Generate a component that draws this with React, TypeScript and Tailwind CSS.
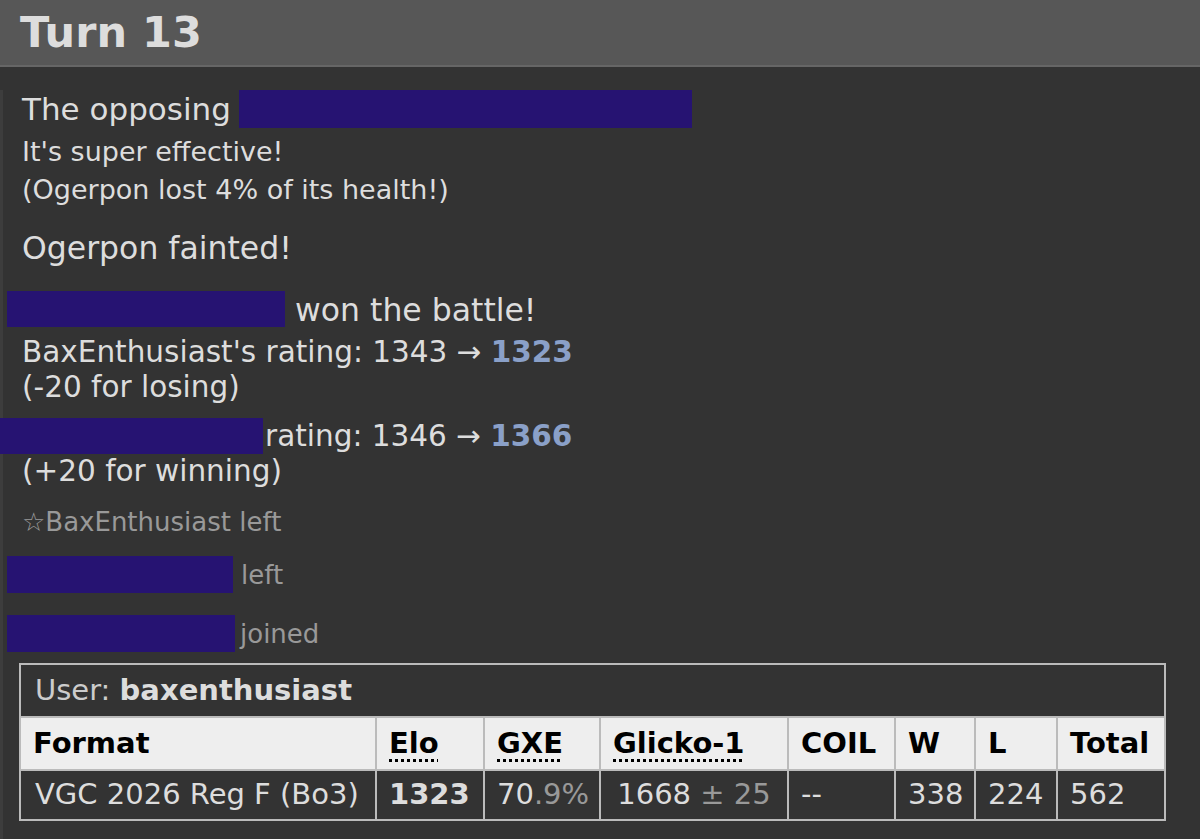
const BAR = "inline-block bg-[#261372] align-middle";

function Redacted({ w, h, className = "" }: { w: string; h: string; className?: string }) {
  return <span className={`${BAR} ${w} ${h} ${className}`} />;
}

const COLS = [
  { label: "Format", w: "w-[356px]" },
  { label: "Elo", w: "w-[108px]", abbr: true },
  { label: "GXE", w: "w-[116px]", abbr: true },
  { label: "Glicko-1", w: "w-[188px]", abbr: true },
  { label: "COIL", w: "w-[107px]" },
  { label: "W", w: "w-[80px]" },
  { label: "L", w: "w-[82px]" },
  { label: "Total", w: "w-[108px]" },
];

export default function App() {
  return (
    <div className="w-[1200px] h-[839px] overflow-hidden bg-[#333] text-[#ddd] font-['DejaVu_Sans',sans-serif]">
      {/* turn header */}
      <div className="h-[67px] bg-[#575757] border-b-2 border-[#666] pl-[20px] flex items-center">
        <h2 className="text-[43px] font-bold leading-none text-[#ddd]">Turn 13</h2>
      </div>

      <div className="h-[772px] border-l-[3px] border-[#3d3d3d] rounded-br-[10px] pl-[19px]">
        {/* move message */}
        <div className="mt-[23px] text-[31px] leading-[38px] whitespace-nowrap">
          The opposing <Redacted w="w-[453px]" h="h-[38px]" className="-ml-[2px] -mt-[6px]" />
        </div>
        <div className="mt-[5px] text-[27px] leading-[38px]">It's super effective!</div>
        <div className="text-[27px] leading-[38px]">(Ogerpon lost 4% of its health!)</div>

        <div className="mt-[19px] text-[31.5px] leading-[40px]">Ogerpon fainted!</div>

        <div className="mt-[22px] -ml-[15px] text-[31.5px] leading-[40px] whitespace-nowrap">
          <Redacted w="w-[278px]" h="h-[36px]" className="-mt-[6px]" /> won the battle!
        </div>

        {/* rating changes */}
        <div className="mt-[5px] text-[29.5px] leading-[35px] whitespace-nowrap">
          BaxEnthusiast's rating: 1343 → <strong className="text-[#8aa0c8]">1323</strong>
        </div>
        <div className="text-[29.5px] leading-[35px]">(-20 for losing)</div>

        <div className="mt-[14px] -ml-[22px] text-[29.5px] leading-[35px] whitespace-nowrap">
          <Redacted w="w-[263px]" h="h-[36px]" className="-mt-[4px] mr-[2px]" />rating: 1346 →{" "}
          <strong className="text-[#8aa0c8]">1366</strong>
        </div>
        <div className="text-[29.5px] leading-[35px]">(+20 for winning)</div>

        {/* join / leave notices */}
        <div className="mt-[15px] text-[26px] leading-[36px] text-[#999]">☆BaxEnthusiast left</div>
        <div className="mt-[15px] -ml-[15px] text-[26px] leading-[40px] text-[#999] whitespace-nowrap">
          <Redacted w="w-[226px]" h="h-[37px]" className="-mt-[4px] mr-[8px]" />left
        </div>
        <div className="mt-[19px] -ml-[15px] text-[26px] leading-[40px] text-[#999] whitespace-nowrap">
          <Redacted w="w-[228px]" h="h-[37px]" className="-mt-[4px] mr-[5px]" />joined
        </div>

        {/* ladder table */}
        <table className="mt-[9px] -ml-[3px] w-[1145px] border-collapse border-2 border-[#bbb] text-[29px] table-fixed">
          <colgroup>
            {COLS.map((c) => (
              <col key={c.label} className={c.w} />
            ))}
          </colgroup>
          <thead>
            <tr className="h-[53px]">
              <th colSpan={8} className="text-left font-normal px-[14px] text-[#ccc]">
                User: <strong className="text-[#ddd]">baxenthusiast</strong>
              </th>
            </tr>
            <tr className="h-[53px] bg-[#eee] text-black">
              {COLS.map((c) => (
                <th key={c.label} className="border-2 border-[#bbb] text-left font-bold px-[12px] whitespace-nowrap">
                  {c.abbr ? (
                    <span className="underline decoration-dotted decoration-[3px] underline-offset-[6px]">{c.label}</span>
                  ) : (
                    c.label
                  )}
                </th>
              ))}
            </tr>
          </thead>
          <tbody>
            <tr className="h-[50px] text-[#ddd]">
              <td className="border-2 border-[#bbb] px-[14px] whitespace-nowrap">VGC 2026 Reg F (Bo3)</td>
              <td className="border-2 border-[#bbb] px-[12px] font-bold">1323</td>
              <td className="border-2 border-[#bbb] px-[12px]">
                70<span className="text-[#999]">.9%</span>
              </td>
              <td className="border-2 border-[#bbb] px-[12px] text-center whitespace-nowrap">
                1668 <span className="text-[#999]">± 25</span>
              </td>
              <td className="border-2 border-[#bbb] px-[12px]">--</td>
              <td className="border-2 border-[#bbb] px-[12px]">338</td>
              <td className="border-2 border-[#bbb] px-[12px]">224</td>
              <td className="border-2 border-[#bbb] px-[12px]">562</td>
            </tr>
          </tbody>
        </table>
      </div>
    </div>
  );
}
